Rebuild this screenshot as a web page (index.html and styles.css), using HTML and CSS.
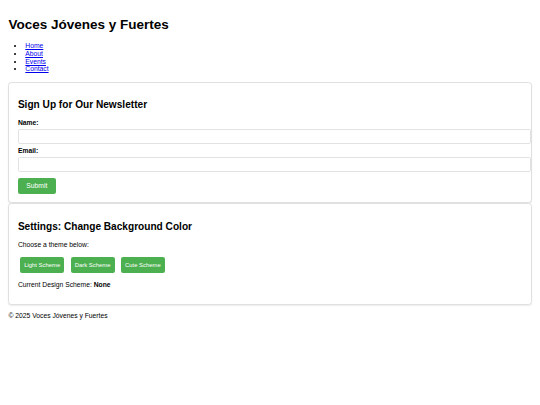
FILE: index.html
```html
<!DOCTYPE html>
<html lang="es">
<head>
<meta charset="utf-8">
<title>Voces Jóvenes y Fuertes</title>
<link rel="stylesheet" href="styles.css">
</head>
<body>
<header class="site-header">
  <h1 class="site-title">Voces Jóvenes y Fuertes</h1>
  <nav>
    <ul class="nav-list">
      <li><a href="#">Home</a></li>
      <li><a href="#">About</a></li>
      <li><a href="#">Events</a></li>
      <li><a href="#">Contact</a></li>
    </ul>
  </nav>
</header>
<main>
  <section class="card card-first">
    <h2 class="card-title">Sign Up for Our Newsletter</h2>
    <form class="form">
      <label class="field-label" for="name">Name:</label>
      <input class="field-input" type="text" id="name">
      <label class="field-label" for="email">Email:</label>
      <input class="field-input" type="email" id="email">
      <button class="btn btn-submit" type="button">Submit</button>
    </form>
  </section>
  <section class="card">
    <h2 class="card-title">Settings: Change Background Color</h2>
    <p class="text">Choose a theme below:</p>
    <div class="scheme-row">
      <button class="btn btn-scheme" type="button">Light Scheme</button>
      <button class="btn btn-scheme" type="button">Dark Scheme</button>
      <button class="btn btn-scheme" type="button">Cute Scheme</button>
    </div>
    <p class="text">Current Design Scheme: <strong>None</strong></p>
  </section>
</main>
<footer class="site-footer">
  <p class="text">© 2025 Voces Jóvenes y Fuertes</p>
</footer>
</body>
</html>
```

FILE: styles.css
```css
body {
  margin: 0;
  padding: 8.44px;
  font-family: "Liberation Sans", Arial, sans-serif;
  font-size: 6.75px;
  line-height: 7.76px;
  color: #000;
  background: #fff;
}

.site-title {
  font-size: 13.5px;
  line-height: 15.5px;
  font-weight: bold;
  margin: 9.05px 0;
}

.nav-list {
  margin: 6.75px 0;
  padding-left: 16.875px;
}

.nav-list a {
  color: #0000ee;
}

.card {
  background: #fff;
  border: 1px solid #e0e0e0;
  border-radius: 3.4px;
  padding: 7.8px 8.44px 8.3px 8.44px;
  box-shadow: 0 1px 1.5px rgba(0, 0, 0, 0.08);
}

.card-first {
  margin-top: 8.44px;
}

.card-title {
  font-size: 10.125px;
  line-height: 11.64px;
  font-weight: bold;
  margin: 8.4px 0;
}

.form {
  margin: 0;
}

.field-label {
  display: block;
  font-weight: bold;
}

.field-input {
  display: block;
  box-sizing: border-box;
  width: calc(100% + 8.44px);
  height: 15.5px;
  padding: 0 3.375px;
  margin: 2.3px 0;
  border: 1px solid #e2e2e2;
  border-radius: 1.7px;
  font-family: "Liberation Sans", Arial, sans-serif;
  font-size: 6.75px;
  background: #fff;
}

.btn {
  background: #4caf50;
  color: #fff;
  border: none;
  border-radius: 2.1px;
  font-family: "Liberation Sans", Arial, sans-serif;
  cursor: pointer;
}

.btn-submit {
  display: block;
  box-sizing: border-box;
  height: 16.4px;
  margin-top: 5.6px;
  padding: 0 8.44px;
  font-size: 6.75px;
  line-height: 7.76px;
}

.scheme-row {
  margin: 0;
}

.btn-scheme {
  box-sizing: border-box;
  height: 15.3px;
  margin: 2.11px;
  padding: 0 4.22px;
  font-size: 5.9px;
  line-height: 6.8px;
  vertical-align: middle;
}

.text {
  margin: 6.75px 0;
}
```
